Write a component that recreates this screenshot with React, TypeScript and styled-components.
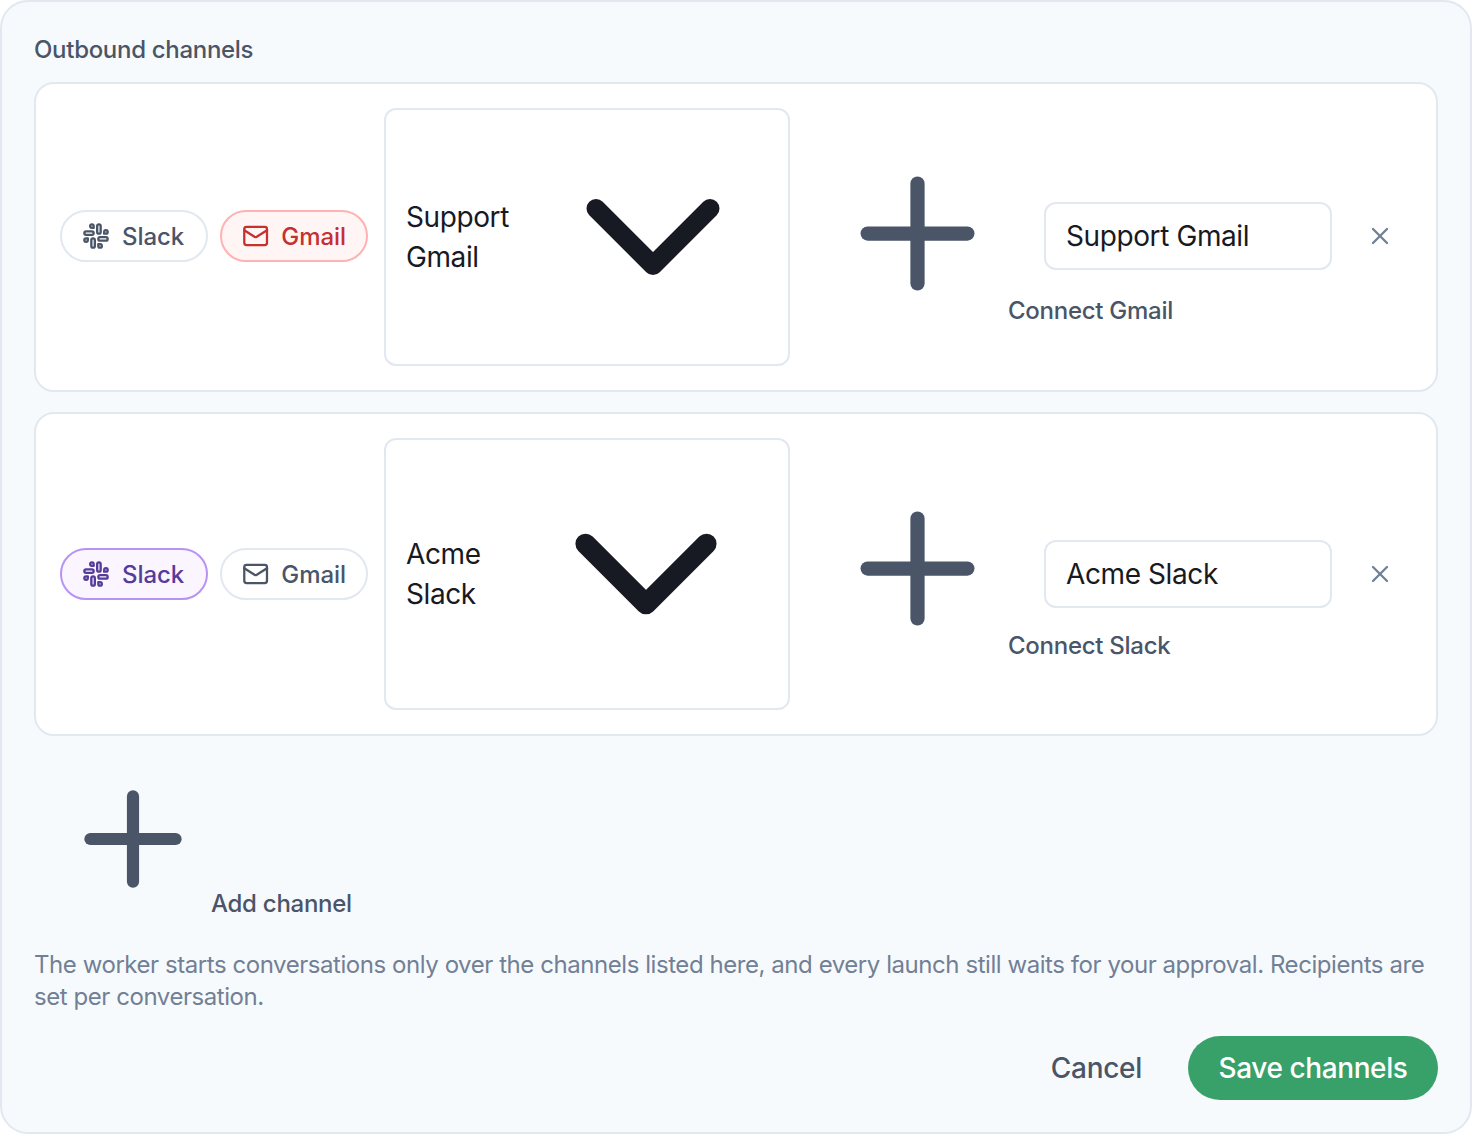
import styled, { createGlobalStyle } from 'styled-components';
import { ChevronDown, Mail, Plus, Slack, X } from 'lucide-react';

const GlobalStyle = createGlobalStyle`
  html, body {
    margin: 0;
    padding: 0;
    background: #ffffff;
  }
  * {
    box-sizing: border-box;
  }
  body, button, input {
    font-family: Inter, "Liberation Sans", sans-serif;
  }
`;

const Card = styled.div`
  display: flex;
  flex-direction: column;
  width: 1472px;
  padding: 32px;
  background: #f7fafc;
  border: 2px solid #e2e8f0;
  border-radius: 28px;
`;

const Heading = styled.div`
  height: 32px;
  margin-bottom: 16px;
  font-size: 24px;
  line-height: 32px;
  font-weight: 500;
  letter-spacing: -0.3px;
  color: #4a5568;
`;

const Rows = styled.div`
  display: flex;
  flex-direction: column;
  gap: 20px;
`;

const Row = styled.div<{ $trim: number }>`
  display: flex;
  align-items: center;
  padding: 24px 24px ${({ $trim }) => 24 + $trim}px;
  background: #ffffff;
  border: 2px solid #e2e8f0;
  border-radius: 20px;
`;

const Pills = styled.div`
  display: flex;
  gap: 12px;
  margin-right: 16px;
`;

const tones = {
  neutral: { bg: '#ffffff', border: '#e2e8f0', text: '#4a5568' },
  red: { bg: '#fff5f5', border: '#feb2b2', text: '#c53030' },
  purple: { bg: '#faf5ff', border: '#b794f4', text: '#553c9a' },
};

const Pill = styled.button<{ $tone: keyof typeof tones }>`
  display: flex;
  align-items: center;
  gap: 12px;
  width: 148px;
  height: 52px;
  padding: 0 20px;
  font-size: 24px;
  font-weight: 500;
  letter-spacing: -0.05px;
  background: ${({ $tone }) => tones[$tone].bg};
  border: 2px solid ${({ $tone }) => tones[$tone].border};
  border-radius: 26px;
  color: ${({ $tone }) => tones[$tone].text};
`;

const Select = styled.div<{ $trim: number }>`
  display: flex;
  align-items: center;
  flex: none;
  width: 406px;
  margin-bottom: ${({ $trim }) => -$trim}px;
  padding: 13px 21px 13px 20px;
  background: #ffffff;
  border: 2px solid #e2e8f0;
  border-radius: 12px;
  color: #171923;
`;

const SelectText = styled.div`
  flex: 1;
  min-width: 0;
  padding-right: 10px;
  font-size: 28px;
  line-height: 40px;
  letter-spacing: -0.4px;
`;

const Chevron = styled(ChevronDown)`
  flex: none;
  color: #171923;
`;

const LinkButton = styled.button`
  flex: none;
  padding: 0 26px;
  background: none;
  border: none;
  font-size: 24px;
  font-weight: 500;
  letter-spacing: -0.27px;
  color: #4a5568;
  text-align: left;
  white-space: nowrap;
`;

const ConnectButton = styled(LinkButton)<{ $lift: number }>`
  width: 222px;
  margin-left: 16px;
  margin-bottom: ${({ $lift }) => $lift}px;
`;

const PlusIcon = styled(Plus)`
  display: inline;
  margin-right: 5px;
  vertical-align: baseline;
`;

const NameInput = styled.input`
  flex: none;
  position: relative;
  width: 288px;
  height: 68px;
  margin-left: 16px;
  padding: 0 20px;
  font-size: 28px;
  letter-spacing: -0.4px;
  color: #171923;
  background: #ffffff;
  border: 2px solid #e2e8f0;
  border-radius: 12px;
`;

const RemoveButton = styled.button`
  display: flex;
  flex: none;
  margin-left: 16px;
  padding: 18px;
  background: none;
  border: none;
  color: #718096;
`;

const AddButton = styled(LinkButton)`
  align-self: flex-start;
  margin-top: 30px;
`;

const Help = styled.p`
  margin: 31px 0 23px;
  font-size: 24px;
  line-height: 32px;
  letter-spacing: -0.44px;
  color: #718096;
`;

const Footer = styled.div`
  display: flex;
  justify-content: flex-end;
  align-items: center;
  gap: 16px;
`;

const Cancel = styled.button`
  height: 64px;
  padding: 0 30px;
  background: none;
  border: none;
  font-size: 28px;
  font-weight: 500;
  letter-spacing: -0.3px;
  color: #4a5568;
`;

const Save = styled.button`
  width: 250px;
  height: 64px;
  background: #38a169;
  border: none;
  border-radius: 32px;
  font-size: 28px;
  font-weight: 500;
  letter-spacing: -0.4px;
  color: #ffffff;
`;

const channels = [
  { id: 'gmail', name: 'Support Gmail', connect: 'Connect Gmail', chevron: 228, trim: 2, lift: 0, slack: 'neutral', gmail: 'red' },
  { id: 'slack', name: 'Acme Slack', connect: 'Connect Slack', chevron: 242, trim: 0, lift: 6, slack: 'purple', gmail: 'neutral' },
] as const;

export default function App() {
  return (
    <>
      <GlobalStyle />
      <Card>
        <Heading>Outbound channels</Heading>
        <Rows>
          {channels.map((channel) => (
            <Row key={channel.id} $trim={channel.trim}>
              <Pills>
                <Pill $tone={channel.slack}>
                  <Slack size={28} />
                  Slack
                </Pill>
                <Pill $tone={channel.gmail}>
                  <Mail size={28} />
                  Gmail
                </Pill>
              </Pills>
              <Select $trim={channel.trim}>
                <SelectText>{channel.name}</SelectText>
                <Chevron size={channel.chevron} />
              </Select>
              <ConnectButton $lift={channel.lift}>
                <PlusIcon size={171} />
                {channel.connect}
              </ConnectButton>
              <NameInput defaultValue={channel.name} />
              <RemoveButton>
                <X size={28} />
              </RemoveButton>
            </Row>
          ))}
        </Rows>
        <AddButton>
          <PlusIcon size={146} />
          Add channel
        </AddButton>
        <Help>
          The worker starts conversations only over the channels listed here, and every launch still waits for your
          approval. Recipients are set per conversation.
        </Help>
        <Footer>
          <Cancel>Cancel</Cancel>
          <Save>Save channels</Save>
        </Footer>
      </Card>
    </>
  );
}
